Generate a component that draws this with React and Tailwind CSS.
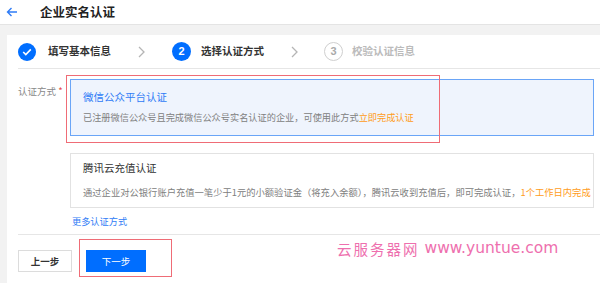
import React from "react";

const F = { fontFamily: '"Noto Sans CJK SC", "Noto Sans", sans-serif' };

function Chevron() {
  return (
    <svg width="7" height="12" viewBox="0 0 7 12" className="shrink-0">
      <path d="M1 1l5 5-5 5" fill="none" stroke="#b5b5b5" strokeWidth="1.3" />
    </svg>
  );
}

export default function App() {
  return (
    <div className="w-[600px] h-[283px] bg-[#f2f2f2] overflow-hidden relative" style={F}>
      {/* header */}
      <div className="h-[25px] bg-white border-b border-[#e4e4e4] flex items-center">
        <svg width="12" height="10" viewBox="0 0 12 10" className="ml-[6px]">
          <path d="M11 5H1.5M5.5 1L1.5 5l4 4" fill="none" stroke="#2f7cf6" strokeWidth="1.4" />
        </svg>
        <div className="ml-[22px] text-[12.5px] font-bold text-[#222] leading-none">企业实名认证</div>
      </div>
      {/* body */}
      <div className="pt-[10px] pl-[7px]">
        <div className="bg-white h-[249px] pl-[11px]">
          {/* steps */}
          <div className="h-[34px] border-b border-[#e6e6e6] flex items-center">
            <div className="w-[18px] h-[18px] rounded-full bg-[#006eff] flex items-center justify-center shrink-0">
              <svg width="10" height="8" viewBox="0 0 10 8">
                <path d="M1.2 4l2.6 2.6L8.8 1.4" fill="none" stroke="white" strokeWidth="1.6" />
              </svg>
            </div>
            <div className="ml-[12px] w-[63px] text-[10.5px] font-semibold text-[#333] leading-none whitespace-nowrap">填写基本信息</div>
            <div className="ml-[27px]"><Chevron /></div>
            <div className="ml-[27px] w-[19px] h-[19px] rounded-full bg-[#006eff] flex items-center justify-center shrink-0 text-white text-[11px] font-bold leading-none" style={{ fontFamily: '"Liberation Sans", sans-serif' }}>2</div>
            <div className="ml-[10px] w-[63px] text-[10.5px] font-semibold text-[#333] leading-none whitespace-nowrap">选择认证方式</div>
            <div className="ml-[27px]"><Chevron /></div>
            <div className="ml-[26px] w-[19px] h-[19px] rounded-full border border-[#cfcfcf] flex items-center justify-center shrink-0 text-[#aaa] text-[11px] font-bold leading-none" style={{ fontFamily: '"Liberation Sans", sans-serif' }}>3</div>
            <div className="ml-[9px] text-[10.5px] font-semibold text-[#bbb] leading-none whitespace-nowrap">校验认证信息</div>
          </div>
          {/* form */}
          <div className="border-b border-[#e6e6e6] flex pt-[10px] pb-[7px]">
            <div className="w-[52px] pt-[6px] text-[9.5px] text-[#888] leading-[12px] whitespace-nowrap">
              认证方式 <span className="text-[#e54545]">*</span>
            </div>
            <div className="w-[524px] flex flex-col relative">
              <div className="h-[57px] border border-[#6aa5f7] bg-[#eff4fd] pl-[12px] pt-[10px]">
                <div className="text-[10.5px] text-[#2f7cf6] leading-[14px]">微信公众平台认证</div>
                <div className="mt-[7px] text-[9.2px] text-[#808080] leading-[12px] whitespace-nowrap">
                  已注册微信公众号且完成微信公众号实名认证的企业，可使用此方式<span className="text-[#ff9c19]">立即完成认证</span>
                </div>
              </div>
              <div className="mt-[17px] h-[55px] border border-[#e2e2e2] bg-white pl-[12px] pt-[7px]">
                <div className="text-[10.5px] text-[#333] leading-[14px]">腾讯云充值认证</div>
                <div className="mt-[11px] text-[9.3px] text-[#808080] leading-[12px] whitespace-nowrap">
                  通过企业对公银行账户充值一笔少于1元的小额验证金（将充入余额），腾讯云收到充值后，即可完成认证，<span className="text-[#ff9c19]">1个工作日内完成</span>
                </div>
              </div>
              <div className="mt-[7px] ml-[2px] text-[9.2px] text-[#2f7cf6] leading-[12px]">更多认证方式</div>
              {/* red highlight */}
              <div className="absolute left-[-4px] top-[-4px] w-[374px] h-[68px] border-[1.5px] border-[#ef6c76] pointer-events-none" />
            </div>
          </div>
          {/* buttons */}
          <div className="mt-[15px] flex items-center relative">
            <div className="w-[54px] h-[22px] border border-[#dcdcdc] bg-white flex items-center justify-center text-[9.5px] font-semibold text-[#333]">上一步</div>
            <div className="ml-[14px] w-[60px] h-[22px] bg-[#006eff] flex items-center justify-center text-[9.5px] text-white">下一步</div>
            <div className="absolute left-[61px] top-[-11px] w-[93px] h-[38px] border-[1.5px] border-[#ef6c76] pointer-events-none" />
          </div>
        </div>
      </div>
      {/* watermark */}
      <div className="absolute left-[337px] top-[241px] flex items-center text-[#ee6fae] whitespace-nowrap leading-none">
        <span className="text-[14.5px] tracking-[2px]" style={{ fontFamily: '"Noto Sans CJK SC", serif' }}>云服务器网</span>
        <span className="ml-[5px] text-[15.5px]" style={{ fontFamily: '"DejaVu Sans", sans-serif' }}>www.yuntue.com</span>
      </div>
    </div>
  );
}
